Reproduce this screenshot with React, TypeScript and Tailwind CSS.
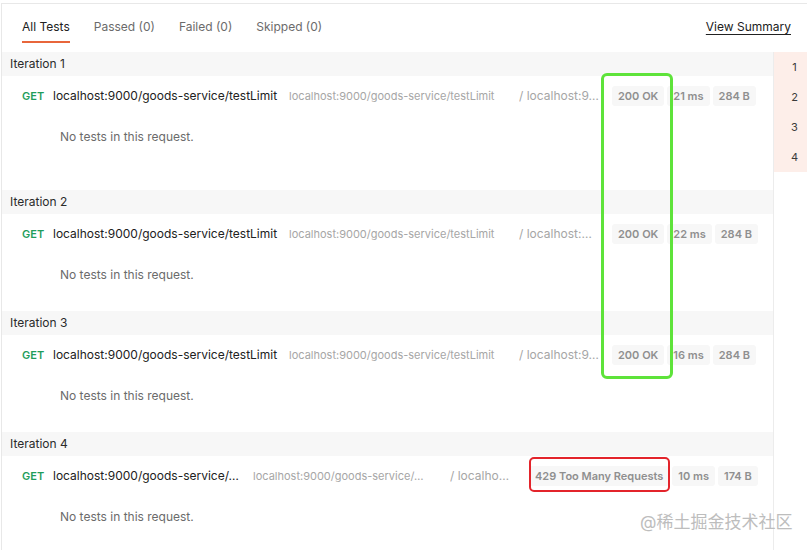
type Req = {
  n: number;
  url: string;
  full: string;
  path: string;
  status: string;
  time: string;
  size: string;
  w: [string, string, string];
};

const rows: Req[] = [
  { n: 1, url: "localhost:9000/goods-service/testLimit", full: "localhost:9000/goods-service/testLimit", path: "/ localhost:9…", status: "200 OK", time: "21 ms", size: "284 B", w: ["w-[236px]", "w-[230px]", "w-[93px]"] },
  { n: 2, url: "localhost:9000/goods-service/testLimit", full: "localhost:9000/goods-service/testLimit", path: "/ localhost:…", status: "200 OK", time: "22 ms", size: "284 B", w: ["w-[236px]", "w-[230px]", "w-[93px]"] },
  { n: 3, url: "localhost:9000/goods-service/testLimit", full: "localhost:9000/goods-service/testLimit", path: "/ localhost:9…", status: "200 OK", time: "16 ms", size: "284 B", w: ["w-[236px]", "w-[230px]", "w-[93px]"] },
  { n: 4, url: "localhost:9000/goods-service/…", full: "localhost:9000/goods-service/…", path: "/ localho…", status: "429 Too Many Requests", time: "10 ms", size: "174 B", w: ["w-[200px]", "w-[197px]", "w-[79px]"] },
];

function Badge({ children }: { children: React.ReactNode }) {
  return (
    <span className="h-5 px-[6px] flex items-center rounded-[3px] bg-[#f7f7f7] text-[11px] font-semibold text-[#8f8f8f] whitespace-nowrap">
      {children}
    </span>
  );
}

function Iteration({ r, first }: { r: Req; first?: boolean }) {
  return (
    <div className={first ? "pb-[45px]" : "pb-[28px]"}>
      <div className="h-6 bg-[#f7f7f7] pl-2 flex items-center text-[12px] text-[#2b2b2b]">
        Iteration {r.n}
      </div>
      <div className="h-5 mt-[10px] pl-5 flex items-center whitespace-nowrap">
        <span className="w-[31px] text-[11px] font-semibold text-[#1f9d5c]">GET</span>
        <span className={`${r.w[0]} overflow-hidden text-[12px] text-[#212121]`}>{r.url}</span>
        <span className={`${r.w[1]} overflow-hidden text-[11px] text-[#a6a6a6]`}>{r.full}</span>
        <span className={`${r.w[2]} overflow-hidden text-[12px] text-[#a6a6a6]`}>{r.path}</span>
        <div className="flex items-center gap-[3px]">
          <Badge>{r.status}</Badge>
          <Badge>{r.time}</Badge>
          <Badge>{r.size}</Badge>
        </div>
      </div>
      <div className="mt-[23px] pl-[58px] text-[12px] text-[#6b6b6b] leading-4">
        No tests in this request.
      </div>
    </div>
  );
}

export default function App() {
  return (
    <div className="relative w-[807px] h-[550px] overflow-hidden bg-white" style={{ fontFamily: "Inter, 'Noto Sans CJK SC', sans-serif" }}>
      <div className="mt-[3px] ml-[1px] h-[547px] border-t border-l border-[#e8e8e8] flex flex-col">
        <div className="h-12 flex items-start pl-[20px] pr-[16px] shrink-0">
          <div className="flex gap-6 text-[12px] leading-4 mt-[15px]">
            <div className="text-[#212121] border-b-2 border-[#e8663b] pb-[6px]">All Tests</div>
            <div className="text-[#6b6b6b]">Passed (0)</div>
            <div className="text-[#6b6b6b]">Failed (0)</div>
            <div className="text-[#6b6b6b]">Skipped (0)</div>
          </div>
          <div className="ml-auto mt-[15px] text-[12px] leading-4 text-[#212121] underline underline-offset-[3px]">View Summary</div>
        </div>
        <div className="flex flex-1 min-h-0">
          <div className="flex-1 min-w-0">
            {rows.map((r, i) => (
              <Iteration key={r.n} r={r} first={i === 0} />
            ))}
          </div>
          <div className="w-[34px] shrink-0 border-l border-[#ececec]">
            <div className="bg-[#fdeee9] text-[11px] text-[#3a3a3a]">
              {[1, 2, 3, 4].map((n) => (
                <div key={n} className="h-[30px] flex items-center justify-center pl-2">{n}</div>
              ))}
            </div>
          </div>
        </div>
      </div>

      <div className="absolute left-[601px] top-[73px] w-[72px] h-[306px] border-[3px] border-[#5ee33a] rounded-[6px]" />
      <div className="absolute left-[529px] top-[457px] w-[141px] h-[35px] border-2 border-[#e3242b] rounded-[5px]" />
      <div className="absolute left-[640px] top-[510px] text-[17px] text-[#bdbdbd] whitespace-nowrap">@稀土掘金技术社区</div>
    </div>
  );
}
